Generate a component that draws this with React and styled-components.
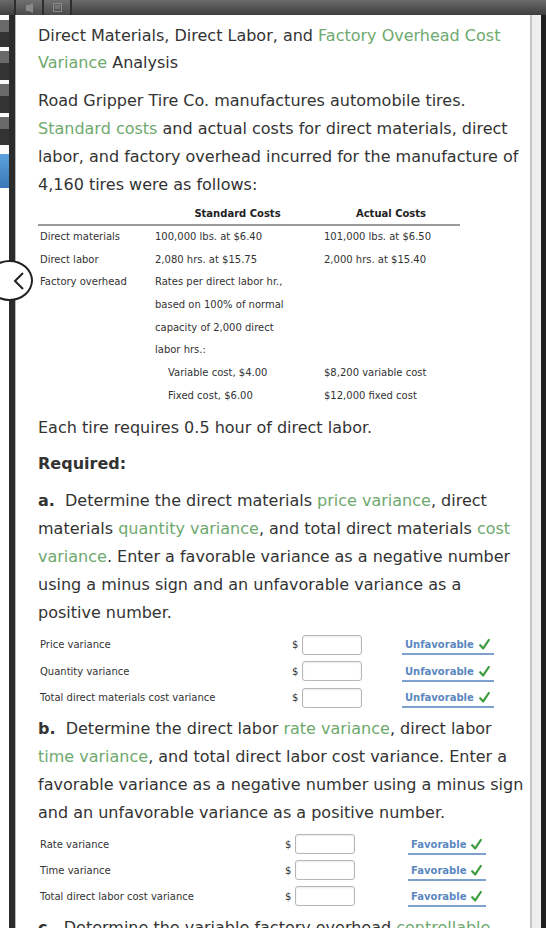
import React from 'react';
import styled, { createGlobalStyle } from 'styled-components';

const GlobalStyle = createGlobalStyle`
  html, body {
    margin: 0;
    padding: 0;
    background: #fff;
  }
  body {
    font-family: "DejaVu Sans", Verdana, sans-serif;
    color: #333;
  }
`;

const Frame = styled.div`
  position: relative;
  width: 546px;
  height: 928px;
  overflow: hidden;
  display: flex;
  flex-direction: column;
`;

const TopBar = styled.div`
  height: 15px;
  flex-shrink: 0;
  display: flex;
  padding-left: 14px;
  background: linear-gradient(#6a6a6a, #3e3e3e);
`;

const Tab = styled.div`
  width: 26px;
  height: 15px;
  border-left: 2px solid #2e2e2e;
  border-right: ${(p) => (p.$last ? '2px solid #2e2e2e' : 'none')};
  display: flex;
  align-items: center;
  justify-content: center;
  background: linear-gradient(#707070, #4a4a4a);
`;

const Body = styled.div`
  flex: 1;
  display: flex;
  min-height: 0;
`;

const Sidebar = styled.div`
  width: 9px;
  display: flex;
  flex-direction: column;
`;

const SideItem = styled.div`
  height: ${(p) => p.$h}px;
  background: ${(p) => p.$bg};
`;

const Rail = styled.div`
  width: 6px;
  background: #2b2b2b;
  border-right: 1px solid #b9b9b9;
`;

const Content = styled.div`
  flex: 1;
  padding: 7px 0 0 22px;
  min-width: 0;
`;

const Gutter = styled.div`
  width: 16px;
  display: flex;
`;

const GutterTrack = styled.div`
  flex: 1;
  background: #eeeeee;
  border-left: 2px solid #c6c6c6;
`;

const GutterEdge = styled.div`
  width: 5px;
  background: #1f1f1f;
`;

const Title = styled.h1`
  margin: 0;
  font-size: 16px;
  font-weight: normal;
  line-height: 27px;
  white-space: nowrap;
`;

const Para = styled.p`
  margin: ${(p) => p.$mt || 0}px 0 0;
  font-size: 16px;
  line-height: 28px;
  white-space: nowrap;
`;

const Term = styled.span`
  color: #6ea96e;
`;

const Strong = styled.b`
  font-weight: bold;
`;

const CostTable = styled.div`
  margin-top: 5px;
  width: 422px;
  display: grid;
  grid-template-columns: 115px 169px 138px;
  font-size: 10px;
`;

const HeadCell = styled.div`
  height: 20px;
  line-height: 20px;
  font-weight: bold;
  text-align: center;
  color: #222;
  border-bottom: 2px solid #9a9a9a;
`;

const Cell = styled.div`
  height: 22.7px;
  line-height: 22.7px;
  padding-left: ${(p) => p.$indent || 2}px;
  white-space: nowrap;
`;

const Answers = styled.div`
  margin-top: ${(p) => p.$mt}px;
  display: flex;
  flex-direction: column;
`;

const AnswerRow = styled.div`
  height: ${(p) => p.$h}px;
  display: grid;
  grid-template-columns: ${(p) => p.$label}px 10px 60px ${(p) => p.$gap}px auto;
  align-items: center;
  padding-left: 2px;
  font-size: 10px;
`;

const Dollar = styled.span`
  font-size: 10px;
  color: #333;
`;

const AmountInput = styled.input`
  box-sizing: border-box;
  width: 60px;
  height: 20px;
  border: 1px solid #b6b6b6;
  border-radius: 3px;
  box-shadow: inset 0 1px 2px rgba(0, 0, 0, 0.08);
  padding: 0 4px;
  font-size: 10px;
`;

const Status = styled.span`
  justify-self: start;
  display: flex;
  align-items: center;
  gap: 5px;
  padding: 0 4px 1px 3px;
  border-bottom: 2px solid #7ea2cd;
  color: #5a87c0;
  font-weight: bold;
  font-size: 10px;
  line-height: 15px;
  margin-top: 3px;
`;

const BackButton = styled.div`
  position: absolute;
  left: -14px;
  top: 260px;
  width: 37px;
  height: 37px;
  border: 2px solid #222;
  border-radius: 50%;
  background: #fff;
  display: flex;
  align-items: center;
  justify-content: flex-end;
  padding-right: 6px;
  box-sizing: content-box;
`;

const sideItems = [
  ['#fafafa', 5], ['#6a6a6a', 12], ['#333', 15],
  ['#fafafa', 4], ['#6a6a6a', 12], ['#333', 17],
  ['#fafafa', 4], ['#6a6a6a', 12], ['#333', 17],
  ['#fafafa', 4], ['#6a6a6a', 12], ['#333', 16],
  ['#fafafa', 9], ['linear-gradient(#5ba3de, #3a77b6)', 34],
];

const costRows = [
  ['Direct materials', '100,000 lbs. at $6.40', '101,000 lbs. at $6.50'],
  ['Direct labor', '2,080 hrs. at $15.75', '2,000 hrs. at $15.40'],
  ['Factory overhead', 'Rates per direct labor hr.,', ''],
  ['', 'based on 100% of normal', ''],
  ['', 'capacity of 2,000 direct', ''],
  ['', 'labor hrs.:', ''],
  ['', 'Variable cost, $4.00', '$8,200 variable cost', true],
  ['', 'Fixed cost, $6.00', '$12,000 fixed cost', true],
];

const partA = ['Price variance', 'Quantity variance', 'Total direct materials cost variance'];
const partB = ['Rate variance', 'Time variance', 'Total direct labor cost variance'];

const CheckMark = () => (
  <svg width="11" height="11" viewBox="0 0 11 11">
    <path d="M1.2 6.2 L4.2 9.4 L9.8 1" fill="none" stroke="#3d9c3d" strokeWidth="2.2" strokeLinecap="round" strokeLinejoin="round" />
  </svg>
);

function AnswerBlock({ labels, result, label, gap, h, mt }) {
  return (
    <Answers $mt={mt}>
      {labels.map((l) => (
        <AnswerRow key={l} $label={label} $gap={gap} $h={h}>
          <span>{l}</span>
          <Dollar>$</Dollar>
          <AmountInput type="text" />
          <span />
          <Status>
            {result}
            <CheckMark />
          </Status>
        </AnswerRow>
      ))}
    </Answers>
  );
}

export default function App() {
  return (
    <Frame>
      <GlobalStyle />
      <TopBar>
        <Tab>
          <svg width="9" height="10" viewBox="0 0 9 10">
            <path d="M1 2h3l4-2v10l-4-2H1z" fill="#8a8a8a" />
          </svg>
        </Tab>
        <Tab $last>
          <svg width="9" height="9" viewBox="0 0 9 9">
            <rect x="0.5" y="0.5" width="8" height="8" fill="none" stroke="#8a8a8a" />
            <path d="M2 3h5M2 5h5" stroke="#8a8a8a" />
          </svg>
        </Tab>
      </TopBar>
      <Body>
        <Sidebar>
          {sideItems.map(([bg, h], i) => (
            <SideItem key={i} $bg={bg} $h={h} />
          ))}
        </Sidebar>
        <Rail />
        <Content>
          <Title>
            Direct Materials, Direct Labor, and <Term>Factory Overhead Cost</Term>
            <br />
            <Term>Variance</Term> Analysis
          </Title>
          <Para $mt={11}>
            Road Gripper Tire Co. manufactures automobile tires.
            <br />
            <Term>Standard costs</Term> and actual costs for direct materials, direct
            <br />
            labor, and factory overhead incurred for the manufacture of
            <br />
            4,160 tires were as follows:
          </Para>

          <CostTable>
            <HeadCell />
            <HeadCell>Standard Costs</HeadCell>
            <HeadCell>Actual Costs</HeadCell>
            {costRows.map(([a, b, c, indent], i) => (
              <React.Fragment key={i}>
                <Cell>{a}</Cell>
                <Cell $indent={indent ? 15 : 2}>{b}</Cell>
                <Cell>{c}</Cell>
              </React.Fragment>
            ))}
          </CostTable>

          <Para $mt={6}>Each tire requires 0.5 hour of direct labor.</Para>
          <Para $mt={8}>
            <Strong>Required:</Strong>
          </Para>
          <Para $mt={9}>
            <Strong>a.</Strong>&nbsp; Determine the direct materials <Term>price variance</Term>, direct
            <br />
            materials <Term>quantity variance</Term>, and total direct materials <Term>cost</Term>
            <br />
            <Term>variance</Term>. Enter a favorable variance as a negative number
            <br />
            using a minus sign and an unfavorable variance as a
            <br />
            positive number.
          </Para>
          <AnswerBlock labels={partA} result="Unfavorable" label={252} gap={40} h={26.5} mt={5} />

          <Para $mt={4}>
            <Strong>b.</Strong>&nbsp; Determine the direct labor <Term>rate variance</Term>, direct labor
            <br />
            <Term>time variance</Term>, and total direct labor cost variance. Enter a
            <br />
            favorable variance as a negative number using a minus sign
            <br />
            and an unfavorable variance as a positive number.
          </Para>
          <AnswerBlock labels={partB} result="Favorable" label={245} gap={53} h={26} mt={4} />

          <Para $mt={5}>
            <Strong>c.</Strong>&nbsp; Determine the variable factory overhead <Term>controllable</Term>
          </Para>
        </Content>
        <Gutter>
          <GutterTrack />
          <GutterEdge />
        </Gutter>
      </Body>
      <BackButton>
        <svg width="12" height="18" viewBox="0 0 12 18">
          <polyline points="10,1 2,9 10,17" fill="none" stroke="#222" strokeWidth="2" />
        </svg>
      </BackButton>
    </Frame>
  );
}
